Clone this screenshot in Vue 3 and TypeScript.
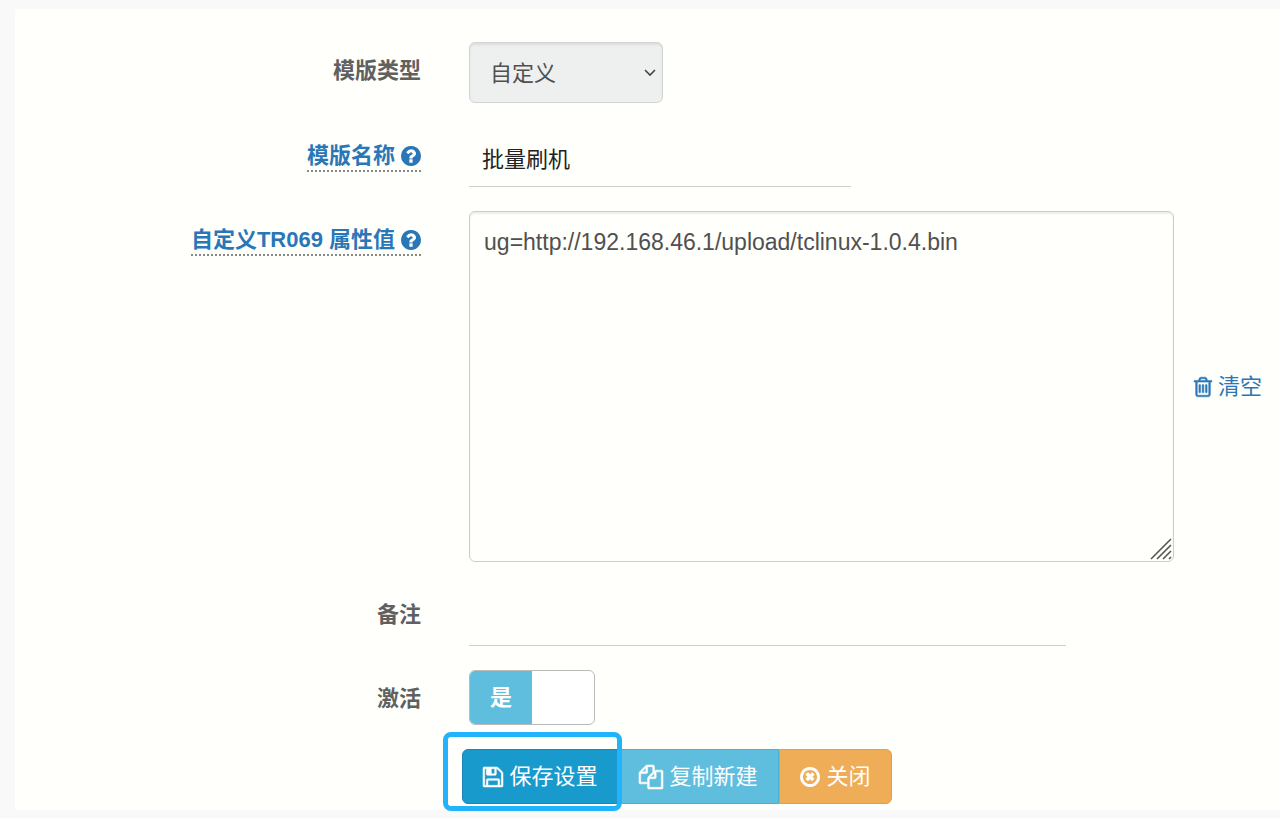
<script setup lang="ts">
import { ref } from 'vue'

const kind = ref('custom')
const name = ref('批量刷机')
const attributes = ref('ug=http://192.168.46.1/upload/tclinux-1.0.4.bin')
const remark = ref('')
const active = ref(true)

const helpIcon =
  'M1024 1376v-192q0-14-9-23t-23-9h-192q-14 0-23 9t-9 23v192q0 14 9 23t23 9h192q14 0 23-9t9-23zm256-672q0-88-55.5-163t-138.5-116-170-41q-243 0-371 213-15 24 8 42l132 100q7 6 19 6 16 0 25-12 53-68 86-92 34-24 86-24 48 0 85.5 26t37.5 59q0 38-20 61t-68 45q-63 28-115.5 86.5t-52.5 125.5v36q0 14 9 23t23 9h192q14 0 23-9t9-23q0-19 21.5-49.5t54.5-49.5q32-18 49-28.5t46-35 44.5-48 28-60.5 12.5-81zm384 192q0 209-103 385.5t-279.5 279.5-385.5 103-385.5-103-279.5-279.5-103-385.5 103-385.5 279.5-279.5 385.5-103 385.5 103 279.5 279.5 103 385.5z'
</script>

<template>
  <main class="page">
    <form class="panel" @submit.prevent>
      <div class="row">
        <label class="label" for="kind">模版类型</label>
        <div class="field">
          <div class="select-wrap">
            <select id="kind" v-model="kind" class="select" disabled>
              <option value="custom">自定义</option>
            </select>
            <svg class="chevron" viewBox="0 0 12 8" aria-hidden="true">
              <path d="M1 1l5 5 5-5" fill="none" stroke="currentColor" stroke-width="1.6" />
            </svg>
          </div>
        </div>
      </div>

      <div class="row">
        <label class="label" for="name">
          <span class="help">模版名称
            <svg class="icon" viewBox="128 128 1536 1536" aria-hidden="true"><path :d="helpIcon" /></svg>
          </span>
        </label>
        <div class="field">
          <input id="name" v-model="name" class="line-input name-input" type="text" />
        </div>
      </div>

      <div class="row">
        <label class="label" for="attributes">
          <span class="help">自定义TR069 属性值
            <svg class="icon" viewBox="128 128 1536 1536" aria-hidden="true"><path :d="helpIcon" /></svg>
          </span>
        </label>
        <div class="field area-field">
          <div class="area-wrap">
            <textarea id="attributes" v-model="attributes" class="area" spellcheck="false"></textarea>
            <svg class="grip" viewBox="0 0 22 22" aria-hidden="true">
              <path d="M1 21L21 1M7 21L21 7M13 21l8-8M19 21l2-2" fill="none" stroke="currentColor" stroke-width="1.6" />
            </svg>
          </div>
          <a class="clear" href="#" @click.prevent="attributes = ''">
            <svg class="trash bold" viewBox="192 128 1408 1536" aria-hidden="true">
              <path d="M704 736v576q0 14-9 23t-23 9h-64q-14 0-23-9t-9-23v-576q0-14 9-23t23-9h64q14 0 23 9t9 23zm256 0v576q0 14-9 23t-23 9h-64q-14 0-23-9t-9-23v-576q0-14 9-23t23-9h64q14 0 23 9t9 23zm256 0v576q0 14-9 23t-23 9h-64q-14 0-23-9t-9-23v-576q0-14 9-23t23-9h64q14 0 23 9t9 23zm128 724v-948h-896v948q0 22 7 40.5t14.5 27 10.5 8.5h832q3 0 10.5-8.5t14.5-27 7-40.5zm-672-1076h448l-48-117q-7-9-17-11h-317q-10 2-17 11zm928 32v64q0 14-9 23t-23 9h-96v948q0 83-47 143.5t-113 60.5h-832q-66 0-113-58.5t-47-141.5v-952h-96q-14 0-23-9t-9-23v-64q0-14 9-23t23-9h309l70-167q15-37 54-63t79-26h320q40 0 79 26t54 63l70 167h309q14 0 23 9t9 23z" />
            </svg>清空</a>
        </div>
      </div>

      <div class="row">
        <label class="label" for="remark">备注</label>
        <div class="field">
          <input id="remark" v-model="remark" class="line-input remark-input" type="text" />
        </div>
      </div>

      <div class="row">
        <label class="label" for="active">激活</label>
        <div class="field">
          <label class="switch" :class="{ off: !active }">
            <input id="active" v-model="active" class="switch-input" type="checkbox" role="switch" />
            <span class="switch-text">{{ active ? '是' : '否' }}</span>
            <span class="switch-knob"></span>
          </label>
        </div>
      </div>

      <div class="actions">
        <div class="save-slot">
          <button class="btn save" type="submit">
            <svg class="icon bold" viewBox="0 128 1536 1536" aria-hidden="true">
              <path d="M384 1536h768v-384h-768v384zm896 0h128v-896q0-14-10-38.5t-20-34.5l-281-281q-10-10-34-20t-39-10v416q0 40-28 68t-68 28h-576q-40 0-68-28t-28-68v-416h-128v1280h128v-416q0-40 28-68t68-28h832q40 0 68 28t28 68v416zm-384-928v-320q0-13-9.5-22.5t-22.5-9.5h-192q-13 0-22.5 9.5t-9.5 22.5v320q0 13 9.5 22.5t22.5 9.5h192q13 0 22.5-9.5t9.5-22.5zm640 32v928q0 40-28 68t-68 28h-1344q-40 0-68-28t-28-68v-1344q0-40 28-68t68-28h928q40 0 88 20t76 48l280 280q28 28 48 76t20 88z" />
            </svg>保存设置</button>
          <span class="highlight"></span>
        </div>
        <button class="btn copy" type="button">
          <svg class="icon wide bold" viewBox="0 0 1792 1792" aria-hidden="true">
            <path d="M1696 384q40 0 68 28t28 68v1216q0 40-28 68t-68 28h-960q-40 0-68-28t-28-68v-288h-544q-40 0-68-28t-28-68v-672q0-40 20-88t48-76l408-408q28-28 76-48t88-20h416q40 0 68 28t28 68v328q68-40 128-40h416zm-544 213l-299 299h299v-299zm-640-384l-299 299h299v-299zm196 647l316-316v-416h-384v416q0 40-28 68t-68 28h-416v640h512v-256q0-40 20-88t48-76zm956 804v-1152h-384v416q0 40-28 68t-68 28h-416v640h896z" />
          </svg>复制新建</button>
        <button class="btn close" type="button">
          <svg class="icon" viewBox="128 128 1536 1536" aria-hidden="true">
            <path d="M1225 1055l-146 146q-10 10-23 10t-23-10l-137-137-137 137q-10 10-23 10t-23-10l-146-146q-10-10-10-23t10-23l137-137-137-137q-10-10-10-23t10-23l146-146q10-10 23-10t23 10l137 137 137-137q10-10 23-10t23 10l146 146q10 10 10 23t-10 23l-137 137 137 137q10 10 10 23t-10 23zm215-159q0-148-73-273t-198-198-273-73-273 73-198 198-73 273 73 273 198 198 273 73 273-73 198-198 73-273zm224 0q0 209-103 385.5t-279.5 279.5-385.5 103-385.5-103-279.5-279.5-103-385.5 103-385.5 279.5-279.5 385.5-103 385.5 103 279.5 279.5 103 385.5z" />
          </svg>关闭</button>
      </div>
    </form>
  </main>
</template>

<style>
body {
  margin: 0;
  background: #f9f9fa;
}
</style>

<style scoped>
.page,
.page * {
  box-sizing: border-box;
}

.page {
  padding: 9px 0 8px 15px;
  color: #505050;
  font-family: 'Liberation Sans', 'Noto Sans CJK SC', sans-serif;
  font-size: 22px;
  line-height: 32px;
}

.panel {
  display: flex;
  flex-direction: column;
  gap: 24px;
  padding: 33px 0 6px;
  background: #fffffb;
}

.row {
  display: grid;
  grid-template-columns: 32.1% 1fr;
  column-gap: 48px;
  align-items: start;
}

.label {
  padding-top: 13px;
  color: #606060;
  font-weight: 700;
  text-align: right;
}

.help {
  display: inline-flex;
  align-items: center;
  gap: 6px;
  line-height: 28px;
  color: #2a77b8;
  border-bottom: 2px dotted #888;
}

.icon {
  width: 20px;
  height: 20px;
  fill: currentColor;
  flex: none;
}

.wide {
  width: 24px;
  height: 24px;
}

.bold {
  stroke: currentColor;
  stroke-width: 40;
  overflow: visible;
}

.select-wrap {
  position: relative;
  width: 194px;
}

.select {
  display: block;
  width: 100%;
  height: 61px;
  padding: 2px 36px 0 20px;
  appearance: none;
  border: 1px solid #d2d4d6;
  border-radius: 6px;
  background: #eeefef;
  box-shadow: inset 0 2px 2px rgba(0, 0, 0, 0.08);
  color: #505050;
  font: inherit;
  opacity: 1;
}

.chevron {
  position: absolute;
  top: 27px;
  right: 7px;
  width: 12px;
  height: 8px;
  color: #444;
  pointer-events: none;
}

.line-input {
  display: block;
  height: 60px;
  padding: 0 13px;
  border: 0;
  border-bottom: 1px solid #cfd0d3;
  border-radius: 0;
  background: transparent;
  color: #222;
  font: inherit;
  outline: none;
}

.name-input {
  width: 47.1%;
}

.remark-input {
  width: 73.6%;
}

.area-field {
  display: flex;
  align-items: center;
  gap: 20px;
  padding-right: 18px;
}

.area-wrap {
  position: relative;
  flex: 1;
}

.area {
  display: block;
  width: 100%;
  height: 351px;
  padding: 14px;
  border: 1px solid #cbccd0;
  border-radius: 6px;
  background: transparent;
  box-shadow: inset 0 2px 2px rgba(0, 0, 0, 0.07);
  color: #505050;
  font: inherit;
  font-size: 23px;
  resize: none;
  outline: none;
}

.grip {
  position: absolute;
  right: 2px;
  bottom: 2px;
  width: 22px;
  height: 22px;
  color: #555;
  pointer-events: none;
}

.clear {
  display: flex;
  align-items: center;
  gap: 6px;
  color: #2a77b8;
  text-decoration: none;
  white-space: nowrap;
}

.trash {
  width: 18px;
  height: 20px;
  fill: currentColor;
}

.switch {
  position: relative;
  display: flex;
  width: 126px;
  height: 55px;
  overflow: hidden;
  border: 1px solid #bbb;
  border-radius: 6px;
  background: #fff;
  cursor: pointer;
}

.switch.off {
  flex-direction: row-reverse;
}

.switch-input {
  position: absolute;
  inset: 0;
  margin: 0;
  opacity: 0;
}

.switch-text,
.switch-knob {
  flex: 1;
}

.switch-text {
  background: #5fbedd;
  color: #fff;
  font-weight: 700;
  line-height: 54px;
  text-align: center;
}

.actions {
  display: flex;
  padding-left: 35.3%;
}

.save-slot {
  position: relative;
}

.btn {
  display: flex;
  align-items: center;
  gap: 7px;
  height: 55px;
  padding: 0 20px;
  border: 1px solid transparent;
  border-radius: 0;
  color: #fff;
  font: inherit;
  white-space: nowrap;
  cursor: pointer;
}

.save {
  border-color: #1d84b5;
  border-radius: 6px 0 0 6px;
  background: #199acc;
}

.copy {
  border-color: #43b2d6;
  border-left: 0;
  background: #5fbedd;
}

.close {
  border-color: #ee9c3a;
  border-radius: 0 6px 6px 0;
  background: #f0ad57;
}

.highlight {
  position: absolute;
  inset: -17px -3px -7px -19px;
  border: 5px solid #21b4fc;
  border-radius: 8px;
  pointer-events: none;
}
</style>
